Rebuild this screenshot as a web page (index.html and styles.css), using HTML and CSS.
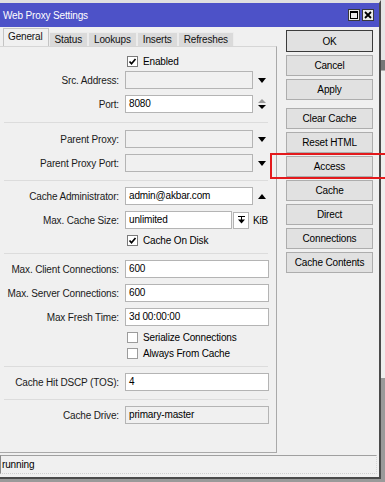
FILE: index.html
```html
<!DOCTYPE html>
<html lang="en">
<head>
  <meta charset="UTF-8" />
  <title>Web Proxy Settings</title>
  <link rel="stylesheet" href="styles.css">
</head>
<body>

  <div class="screen">
    <div class="window">

      <!-- Title bar -->
      <div class="titlebar">
        <span class="title">Web Proxy Settings</span>
        <div class="tb-buttons">
          <span class="tb-btn">
            <svg width="8" height="8" viewBox="0 0 8 8"><rect x="0.5" y="0.5" width="7" height="7" fill="none" stroke="#000"/><rect x="0" y="0" width="8" height="2" fill="#000"/></svg>
          </span>
          <span class="tb-btn">
            <svg width="8" height="8" viewBox="0 0 8 8"><path d="M1 1 L7 7 M7 1 L1 7" stroke="#000" stroke-width="1.8"/></svg>
          </span>
        </div>
      </div>

      <div class="content">
        <div class="left">

          <!-- Tabs -->
          <div class="tabs">
            <span class="tab active">General</span>
            <span class="tab">Status</span>
            <span class="tab">Lookups</span>
            <span class="tab">Inserts</span>
            <span class="tab">Refreshes</span>
          </div>

          <!-- General panel -->
          <div class="panel">
            <div class="check-row first">
              <span class="checkbox checked"><svg width="9" height="9" viewBox="0 0 9 9"><polyline points="1.5,4.5 3.5,6.8 7.5,2" fill="none" stroke="#000" stroke-width="1.7"/></svg></span>
              <span class="check-label">Enabled</span>
            </div>
            <div class="row">
              <span class="label">Src. Address:</span>
              <span class="field short disabled"></span>
              <svg class="arrow" width="8" height="5" viewBox="0 0 8 5"><polygon points="0,0 8,0 4,5" fill="#000"/></svg>
            </div>
            <div class="row">
              <span class="label">Port:</span>
              <span class="field short">8080</span>
              <svg class="arrow" width="8" height="11" viewBox="0 0 8 11"><polygon points="0,4 8,4 4,0" fill="#9a9a9a"/><polygon points="0,6 8,6 4,10" fill="#000"/></svg>
            </div>

            <div class="sep wide"></div>

            <div class="row">
              <span class="label">Parent Proxy:</span>
              <span class="field short disabled"></span>
              <svg class="arrow" width="8" height="5" viewBox="0 0 8 5"><polygon points="0,0 8,0 4,5" fill="#000"/></svg>
            </div>
            <div class="row">
              <span class="label">Parent Proxy Port:</span>
              <span class="field short disabled"></span>
              <svg class="arrow" width="8" height="5" viewBox="0 0 8 5"><polygon points="0,0 8,0 4,5" fill="#000"/></svg>
            </div>

            <div class="sep"></div>

            <div class="row">
              <span class="label">Cache Administrator:</span>
              <span class="field short">admin@akbar.com</span>
              <svg class="arrow" width="8" height="5" viewBox="0 0 8 5"><polygon points="0,5 8,5 4,0" fill="#000"/></svg>
            </div>
            <div class="row">
              <span class="label">Max. Cache Size:</span>
              <span class="field size">unlimited</span>
              <span class="mini-btn"><svg width="7" height="8" viewBox="0 0 7 8"><rect x="0" y="0" width="7" height="1" fill="#000"/><rect x="3" y="1" width="1" height="3" fill="#000"/><polygon points="0,3.5 7,3.5 3.5,7.5" fill="#000"/></svg></span>
              <span class="unit">KiB</span>
            </div>
            <div class="check-row">
              <span class="checkbox checked"><svg width="9" height="9" viewBox="0 0 9 9"><polyline points="1.5,4.5 3.5,6.8 7.5,2" fill="none" stroke="#000" stroke-width="1.7"/></svg></span>
              <span class="check-label">Cache On Disk</span>
            </div>

            <div class="sep"></div>

            <div class="row">
              <span class="label">Max. Client Connections:</span>
              <span class="field full">600</span>
            </div>
            <div class="row">
              <span class="label">Max. Server Connections:</span>
              <span class="field full">600</span>
            </div>
            <div class="row">
              <span class="label">Max Fresh Time:</span>
              <span class="field full">3d 00:00:00</span>
            </div>
            <div class="check-row">
              <span class="checkbox"></span>
              <span class="check-label">Serialize Connections</span>
            </div>
            <div class="check-row">
              <span class="checkbox"></span>
              <span class="check-label">Always From Cache</span>
            </div>

            <div class="sep"></div>

            <div class="row">
              <span class="label">Cache Hit DSCP (TOS):</span>
              <span class="field full">4</span>
            </div>

            <div class="sep"></div>

            <div class="row">
              <span class="label">Cache Drive:</span>
              <span class="field full disabled">primary-master</span>
            </div>
          </div>
        </div>

        <!-- Buttons -->
        <div class="actions">
          <button class="btn default">OK</button>
          <button class="btn">Cancel</button>
          <button class="btn spaced">Apply</button>
          <button class="btn">Clear Cache</button>
          <button class="btn">Reset HTML</button>
          <button class="btn">Access</button>
          <button class="btn">Cache</button>
          <button class="btn">Direct</button>
          <button class="btn">Connections</button>
          <button class="btn">Cache Contents</button>
        </div>
      </div>

      <!-- Status bar -->
      <div class="statusbar">
        <div class="status">running</div>
      </div>
    </div>

    <div class="edge">
      <div class="edge-top"></div>
      <div class="edge-mark"></div>
      <div class="edge-mid"></div>
      <div class="edge-low"></div>
    </div>

    <!-- annotation -->
    <div class="highlight"></div>
  </div>

</body>
</html>
```

FILE: styles.css
```css
html {
  overflow: hidden;
}

body {
  margin: 0;
  width: 385px;
  height: 482px;
  overflow: hidden;
  background: #9a9a9a;
  font-family: 'Liberation Sans', Arial, sans-serif;
  font-size: 10px;
  letter-spacing: -0.15px;
  color: #000;
}

.screen {
  position: relative;
  display: flex;
  width: 385px;
  height: 479px;
  overflow: hidden;
}

.window {
  width: 379px;
  height: 474px;
  border-top: 3px solid #e0e0e0;
  border-right: 2px solid #4a4a4a;
  border-bottom: 2px solid #4a4a4a;
  background: #f0f0f0;
  display: flex;
  flex-direction: column;
}

.titlebar {
  height: 24px;
  background: #4d52c8;
  display: flex;
  align-items: center;
  justify-content: space-between;
  padding: 0 5px 0 3px;
}

.title {
  color: #fff;
}

.tb-buttons {
  display: flex;
  gap: 2px;
}

.tb-btn {
  width: 12px;
  height: 12px;
  box-sizing: border-box;
  border: 1px solid #3a3a3a;
  background: #ececec;
  display: flex;
  align-items: center;
  justify-content: center;
}

.content {
  display: flex;
  padding-top: 1px;
}

.left {
  width: 277px;
}

.tabs {
  display: flex;
  align-items: flex-end;
  height: 18px;
  padding-left: 3px;
}

.tab {
  height: 14px;
  line-height: 14px;
  padding: 0 5px;
  background: #dadada;
  border: 1px solid #ececec;
  border-bottom: none;
  box-sizing: border-box;
  color: #111;
}

.tab.active {
  height: 18px;
  line-height: 16px;
  background: #f0f0f0;
  border-color: #c4c4c4;
  padding: 0 5px 0 4px;
}

.panel {
  height: 407px;
  box-sizing: border-box;
  border-top: 1px solid #d6d6d6;
  border-right: 1px solid #a9a9a9;
  border-bottom: 1px solid #a9a9a9;
  padding-top: 7px;
}

.row {
  display: flex;
  align-items: center;
  height: 24px;
}

.label {
  width: 119px;
  text-align: right;
  margin-right: 6px;
  color: #1a1a1a;
}

.field {
  height: 18px;
  box-sizing: border-box;
  border: 1px solid #b4b4b4;
  background: #fff;
  padding: 0 3px;
  line-height: 16px;
  white-space: nowrap;
}

.field.full { width: 144px; }
.field.short { width: 128px; }
.field.size { width: 107px; }

.field.disabled {
  background: #f0f0f0;
}

.arrow {
  margin-left: 5px;
}

.mini-btn {
  width: 16px;
  height: 17px;
  box-sizing: border-box;
  margin-left: 1px;
  border: 1px solid #b4b4b4;
  background: #fff;
  display: flex;
  align-items: center;
  justify-content: center;
}

.unit {
  margin-left: 4px;
}

.check-row {
  display: flex;
  align-items: center;
  height: 16px;
  padding-left: 127px;
}

.check-row.first { height: 14px; }

.checkbox {
  width: 11px;
  height: 11px;
  box-sizing: border-box;
  border: 1px solid #9c9c9c;
  background: #fff;
  display: flex;
  align-items: center;
  justify-content: center;
}

.checkbox.checked {
  border-color: #7a7a7a;
}

.check-label {
  margin-left: 5px;
}

.sep {
  height: 1px;
  background: #dcdcdc;
  margin: 5px 8px 3px 4px;
}

.sep.wide {
  margin-top: 6px;
  margin-bottom: 4px;
}

.actions {
  width: 87px;
  margin-left: 9px;
  padding-top: 2px;
  display: flex;
  flex-direction: column;
}

.btn {
  height: 21px;
  margin: 0 0 3px;
  padding: 0;
  border: 1px solid #adadad;
  background: #e1e1e1;
  font-family: inherit;
  font-size: 10px;
  letter-spacing: -0.15px;
  color: #000;
}

.btn.default {
  height: 22px;
  border-color: #3c3c3c;
}

.btn.spaced {
  margin-bottom: 8px;
}

.statusbar {
  height: 24px;
  padding-top: 2px;
  box-sizing: border-box;
}

.status {
  width: 377px;
  height: 19px;
  box-sizing: border-box;
  border-top: 1px solid #a0a0a0;
  border-left: 1px solid #8a8a8a;
  border-right: 1px dotted #d8d8d8;
  border-bottom: 1px dotted #cfcfcf;
  padding-left: 1px;
  line-height: 17px;
}

.edge {
  width: 4px;
  display: flex;
  flex-direction: column;
}

.edge-top {
  height: 60px;
  background: #e6e6e6;
}

.edge-mark {
  height: 10px;
  background: #777;
}

.edge-mid {
  height: 307px;
  background: #eeeeee;
  border-top: 1px solid #b0b0b0;
}

.edge-low {
  flex: 1;
  background: #9a9a9a;
}

.highlight {
  position: absolute;
  left: 270px;
  top: 153px;
  width: 130px;
  height: 26px;
  box-sizing: border-box;
  border: 2px solid #e3191c;
  border-right: none;
}
```
